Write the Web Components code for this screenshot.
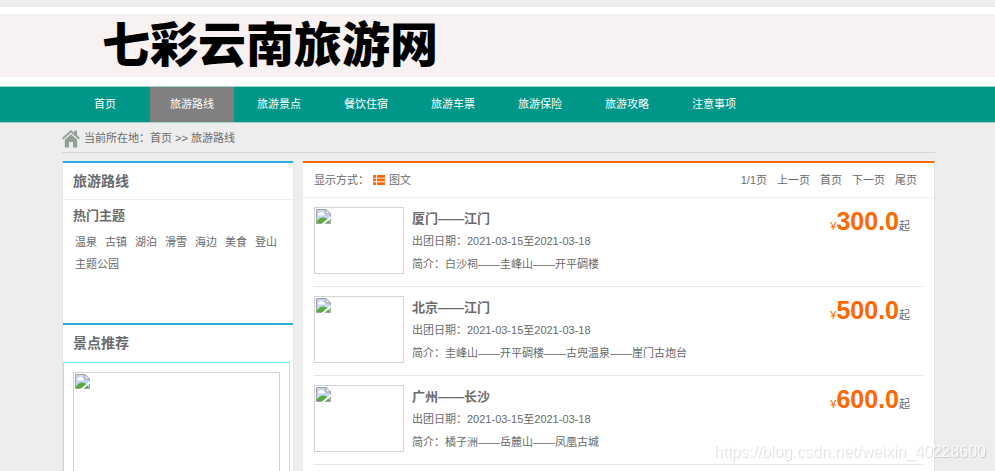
<!DOCTYPE html>
<html lang="zh-CN">
<head>
  <meta charset="UTF-8">
  <meta name="viewport" content="width=device-width, initial-scale=1">
  <title>七彩云南旅游网</title>
<style>
    body {
  --orange: #ff6700;
  --blue: #29abe2;
  --line: #eeeeee;
  --edge-left: 62px;
  --edge-right: 60px;

  margin: 0;
  height: 100vh;
  overflow: hidden;
  display: flex;
  flex-direction: column;
  background: #ededed;
  color: #6a6a6a;
  font: 11px/22px "Liberation Sans", "Noto Sans CJK SC", sans-serif;
}

main {
  flex: 1;
  min-height: 0;
  overflow: hidden;
  display: grid;
  grid-template-columns: 232px 1fr;
  gap: 9px;
  margin: 8px var(--edge-right) 0 var(--edge-left);
}

aside {
  min-height: 0;
  display: flex;
  flex-direction: column;
  overflow: hidden;
  background: white;
  border: 0 solid #e6e6e6;
  border-width: 0 1px;
}

main a {
  color: inherit;
  text-decoration: none;
}
</style>
</head>
<body>
  <site-banner>七彩云南旅游网</site-banner>

  <site-nav>
    <nav-item href="#">首页</nav-item>
    <nav-item href="#" active>旅游路线</nav-item>
    <nav-item href="#">旅游景点</nav-item>
    <nav-item href="#">餐饮住宿</nav-item>
    <nav-item href="#">旅游车票</nav-item>
    <nav-item href="#">旅游保险</nav-item>
    <nav-item href="#">旅游攻略</nav-item>
    <nav-item href="#">注意事项</nav-item>
  </site-nav>

  <bread-crumb current="旅游路线"></bread-crumb>

  <main>
    <aside>
      <side-panel heading="旅游路线">
        <tag-list heading="热门主题">
          <a href="#">温泉</a>
          <a href="#">古镇</a>
          <a href="#">湖泊</a>
          <a href="#">滑雪</a>
          <a href="#">海边</a>
          <a href="#">美食</a>
          <a href="#">登山</a>
          <a href="#">主题公园</a>
        </tag-list>
      </side-panel>
      <side-panel heading="景点推荐">
        <spot-card></spot-card>
      </side-panel>
    </aside>

    <route-list>
      <a slot="pager" href="#">上一页</a>
      <a slot="pager" href="#">首页</a>
      <a slot="pager" href="#">下一页</a>
      <a slot="pager" href="#">尾页</a>
      <route-item price="300.0">
        <a slot="title" href="#">厦门——江门</a>
        <span slot="date">2021-03-15至2021-03-18</span>
        <span slot="intro">白沙祠——圭峰山——开平碉楼</span>
      </route-item>
      <route-item price="500.0">
        <a slot="title" href="#">北京——江门</a>
        <span slot="date">2021-03-15至2021-03-18</span>
        <span slot="intro">圭峰山——开平碉楼——古兜温泉——崖门古炮台</span>
      </route-item>
      <route-item price="600.0">
        <a slot="title" href="#">广州——长沙</a>
        <span slot="date">2021-03-15至2021-03-18</span>
        <span slot="intro">橘子洲——岳麓山——凤凰古城</span>
      </route-item>
    </route-list>
  </main>

  <page-mark>https://blog.csdn.net/weixin_40228600</page-mark>

  <script>
class BaseElement extends HTMLElement {
  constructor() {
    super();
    this.attachShadow({ mode: "open" });
  }

  connectedCallback() {
    this.shadowRoot.innerHTML = this.render();
  }
}

class SiteBanner extends BaseElement {
  render() {
    return `
      <style>
        :host {
          display: block;
          flex: none;
          margin-top: 7px;
          padding: 7px 0 9px;
          background: white;
        }
        h1 {
          margin: 0;
          padding: 0 0 8px 102px;
          background: #f7f1f1;
          color: black;
          font: 900 48px/55px "Noto Sans CJK SC", sans-serif;
        }
      </style>
      <h1><slot></slot></h1>
    `;
  }
}

class SiteNav extends BaseElement {
  render() {
    return `
      <style>
        :host {
          display: block;
          flex: none;
          background: #009688;
          border-top: 1px solid #9fd3cd;
          border-bottom: 1px solid #9fd3cd;
        }
        nav {
          display: flex;
          gap: 3px;
          padding-left: 63px;
        }
      </style>
      <nav><slot></slot></nav>
    `;
  }
}

class NavItem extends BaseElement {
  render() {
    return `
      <style>
        :host {
          display: block;
          width: 84px;
        }
        :host([active]) {
          background: #808080;
        }
        a {
          display: block;
          color: white;
          line-height: 35px;
          text-align: center;
          text-decoration: none;
        }
      </style>
      <a href="${this.getAttribute("href")}"><slot></slot></a>
    `;
  }
}

class BreadCrumb extends BaseElement {
  render() {
    return `
      <style>
        :host {
          flex: none;
          display: flex;
          align-items: center;
          gap: 4px;
          height: 29px;
          margin: 0 var(--edge-right) 0 var(--edge-left);
          border-bottom: 1px solid #d6d6d6;
        }
        svg {
          margin-top: 2px;
        }
        a {
          color: inherit;
          text-decoration: none;
        }
      </style>
      <svg width="18" height="18" viewBox="0 0 18 18" fill="#939e94" aria-hidden="true">
        <path d="M9 0 0 8l1.200 1.400L9 2.600l7.800 6.800L18 8l-3-2.700V.6h-2.600V3Z"></path>
        <path d="M9 4.200 2.800 9.700V17.600h4.200v-5.600h4v5.600h4.200V9.700Z"></path>
      </svg>
      <span>当前所在地：<a href="#">首页</a> &gt;&gt; <a href="#">${this.getAttribute("current")}</a></span>
    `;
  }
}

class SidePanel extends BaseElement {
  render() {
    return `
      <style>
        :host {
          display: block;
          flex: none;
          border-top: 2px solid var(--blue);
        }
        h2 {
          margin: 0;
          padding-left: 10px;
          border-bottom: 1px solid var(--line);
          font-size: 14px;
          line-height: 36px;
        }
      </style>
      <h2>${this.getAttribute("heading")}</h2>
      <slot></slot>
    `;
  }
}

class TagList extends BaseElement {
  render() {
    return `
      <style>
        :host {
          display: block;
          min-height: 118px;
          padding: 5px 10px 0;
        }
        h3 {
          margin: 0 0 4px;
          font-size: 13px;
          line-height: 22px;
        }
        div {
          display: flex;
          flex-wrap: wrap;
          column-gap: 8px;
          padding-left: 2px;
        }
      </style>
      <h3>${this.getAttribute("heading")}</h3>
      <div><slot></slot></div>
    `;
  }
}

/* Empty picture box with the missing-image mark in its corner */
class PhotoFrame extends BaseElement {
  render() {
    return `
      <style>
        :host {
          display: block;
          box-sizing: border-box;
          padding: 1px;
          border: 1px solid #d3d3d3;
          line-height: 0;
        }
      </style>
      <svg width="15" height="15" viewBox="0 0 15 15" role="img" aria-label="图片">
        <path fill="#c3d5f5" d="M.5.5H10L14.500 5v9.500H.5Z"></path>
        <path fill="white" d="M2.500 6.500a1.500 1.500 0 0 1 1-2.600 2.200 2.200 0 0 1 4 .2 1.300 1.300 0 0 1 .5 2.400Z"></path>
        <path fill="#57ad3c" d="M1 14v-1.500C3 9.500 5.500 8 8.500 8.700c2.500.3 4.500 2.300 5.500 5.300Z"></path>
        <path fill="none" stroke="#a2a2a2" d="M.5 14.500V.5H10L14.500 5v9.500Z"></path>
        <path fill="white" stroke="#a2a2a2" d="M10 .5V5h4.500Z"></path>
        <path fill="white" d="M15 7v2.200L8.500 15H5.300Z"></path>
      </svg>
    `;
  }
}

class SpotCard extends BaseElement {
  render() {
    return `
      <style>
        :host {
          display: block;
          margin-right: 3px;
          padding: 9px;
          border: 1px solid #66ffff;
        }
        photo-frame {
          height: 150px;
        }
      </style>
      <photo-frame></photo-frame>
    `;
  }
}

class RouteList extends BaseElement {
  render() {
    return `
      <style>
        :host {
          display: block;
          min-width: 0;
          background: white;
          border-top: 2px solid var(--orange);
          border-right: 1px solid #e2e2e2;
        }
        header {
          display: flex;
          justify-content: space-between;
          padding: 0 17px 0 11px;
          border-bottom: 1px solid var(--line);
          line-height: 34px;
        }
        .mode, .pager {
          display: flex;
          align-items: center;
        }
        .mode {
          gap: 4px;
        }
        .pager {
          gap: 10px;
        }
        a {
          color: inherit;
          text-decoration: none;
        }
        .items {
          padding: 0 11px;
        }
      </style>
      <header>
        <div class="mode">
          <span>显示方式：</span>
          <svg width="12" height="10" viewBox="0 0 12 10" fill="#ff6700" aria-hidden="true">
            <path d="M0 0h3v2.700H0zM4 0h8v2.700H4zM0 3.600h3v2.700H0zM4 3.600h8v2.700H4zM0 7.200h3v2.800H0zM4 7.200h8v2.800H4z"></path>
          </svg>
          <a href="#">图文</a>
        </div>
        <div class="pager"><span>1/1页</span><slot name="pager"></slot></div>
      </header>
      <div class="items"><slot></slot></div>
    `;
  }
}

class RouteItem extends BaseElement {
  render() {
    return `
      <style>
        :host {
          display: grid;
          grid-template-columns: 90px 1fr auto;
          column-gap: 8px;
          padding: 9px 13px 12px 0;
          border-bottom: 1px solid #e6e6e6;
        }
        photo-frame {
          height: 67px;
        }
        h3, p {
          margin: 0;
          line-height: 23px;
        }
        .info {
          height: 67px;
        }
        h3 {
          font-size: 13px;
        }
        .price {
          line-height: 28px;
        }
        b {
          font-size: 25px;
        }
        .money {
          color: var(--orange);
        }
      </style>
      <photo-frame></photo-frame>
      <div class="info">
        <h3><slot name="title"></slot></h3>
        <p>出团日期：<slot name="date"></slot></p>
        <p>简介：<slot name="intro"></slot></p>
      </div>
      <div class="price"><span class="money">¥<b>${this.getAttribute("price")}</b></span>起</div>
    `;
  }
}

class PageMark extends BaseElement {
  render() {
    return `
      <style>
        :host {
          position: fixed;
          right: 9px;
          bottom: 8px;
          color: rgba(255, 255, 255, 0.8);
          font-size: 16px;
          text-shadow: 1px 1px 1px rgba(0, 0, 0, 0.15);
          pointer-events: none;
        }
      </style>
      <slot></slot>
    `;
  }
}

customElements.define("site-banner", SiteBanner);
customElements.define("site-nav", SiteNav);
customElements.define("nav-item", NavItem);
customElements.define("bread-crumb", BreadCrumb);
customElements.define("side-panel", SidePanel);
customElements.define("tag-list", TagList);
customElements.define("photo-frame", PhotoFrame);
customElements.define("spot-card", SpotCard);
customElements.define("route-list", RouteList);
customElements.define("route-item", RouteItem);
customElements.define("page-mark", PageMark);
  </script>
</body>
</html>
